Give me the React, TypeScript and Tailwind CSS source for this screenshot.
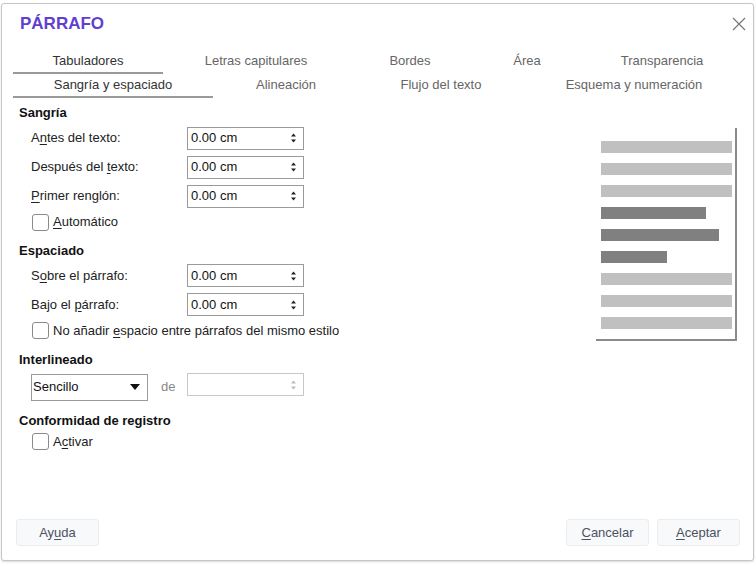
import React from 'react';

const U = ({ children }: { children: React.ReactNode }) => <span className="underline underline-offset-2">{children}</span>;

const Spin = ({ disabled = false }: { disabled?: boolean }) => (
  <svg width="7" height="12" viewBox="0 0 7 12" className={disabled ? 'opacity-30' : ''}>
    <path d="M1 4.5 L3.5 1.5 L6 4.5 Z" fill="#222" />
    <path d="M1 7.5 L3.5 10.5 L6 7.5 Z" fill="#222" />
  </svg>
);

const Field = ({ value = '0.00 cm', disabled = false }: { value?: string; disabled?: boolean }) => (
  <div
    className={`flex h-[23px] w-[117px] items-center justify-between border pl-[3px] pr-[6px] text-[13px] text-[#111] ${
      disabled ? 'border-[#c8c8c8]' : 'border-[#9a9a9a]'
    }`}
  >
    <span>{value}</span>
    <Spin disabled={disabled} />
  </div>
);

const Row = ({ label }: { label: React.ReactNode }) => (
  <div className="flex h-[29px] items-center pl-[17px]">
    <span className="w-[156px] text-[13px] text-[#222]">{label}</span>
    <Field />
  </div>
);

const Check = ({ label }: { label: React.ReactNode }) => (
  <div className="flex h-[23px] items-center gap-[4px] pl-[18px]">
    <div className="h-[17px] w-[17px] rounded-[3px] border border-[#8a8a8a] bg-white" />
    <span className="text-[13px] text-[#222]">{label}</span>
  </div>
);

const Heading = ({ children }: { children: React.ReactNode }) => (
  <div className="pl-[5px] text-[13px] font-bold text-[#111]">{children}</div>
);

const row1 = [
  { t: 'Tabuladores', w: 'w-[150px]', active: true },
  { t: 'Letras capitulares', w: 'w-[186px]' },
  { t: 'Bordes', w: 'w-[122px]' },
  { t: 'Área', w: 'w-[112px]' },
  { t: 'Transparencia', w: 'w-[158px]' },
];
const row2 = [
  { t: 'Sangría y espaciado', w: 'w-[200px]', active: true },
  { t: 'Alineación', w: 'w-[146px]' },
  { t: 'Flujo del texto', w: 'w-[164px]' },
  { t: 'Esquema y numeración', w: 'w-[222px]' },
];

const bars = [
  { w: 'w-[131px]', c: 'bg-[#c0c0c0]' },
  { w: 'w-[131px]', c: 'bg-[#c0c0c0]' },
  { w: 'w-[131px]', c: 'bg-[#c0c0c0]' },
  { w: 'w-[105px]', c: 'bg-[#808080]' },
  { w: 'w-[118px]', c: 'bg-[#808080]' },
  { w: 'w-[66px]', c: 'bg-[#808080]' },
  { w: 'w-[131px]', c: 'bg-[#c0c0c0]' },
  { w: 'w-[131px]', c: 'bg-[#c0c0c0]' },
  { w: 'w-[131px]', c: 'bg-[#c0c0c0]' },
];

const Btn = ({ children }: { children: React.ReactNode }) => (
  <button className="flex h-[27px] w-[83px] items-center justify-center rounded-[3px] border border-[#ececec] bg-[#f8f9fa] text-[13px] text-[#4b5262]">
    {children}
  </button>
);

export default function App() {
  return (
    <div className="h-[566px] w-[756px] overflow-hidden bg-white pt-[3px] pl-[1px] font-['Liberation_Sans',Arial,sans-serif]">
      <div className="flex h-[558px] w-[753px] flex-col rounded-[3px] border border-[#c6c6c6] bg-white shadow-[0_1px_2px_rgba(0,0,0,0.15)]">
        {/* Title */}
        <div className="flex h-[38px] items-center justify-between pl-[18px] pr-[7px] pt-[2px]">
          <span className="text-[17px] font-bold text-[#5f3fd0]">PÁRRAFO</span>
          <svg width="14" height="14" viewBox="0 0 14 14">
            <path d="M1 1 L13 13 M13 1 L1 13" stroke="#777" strokeWidth="1.2" />
          </svg>
        </div>

        {/* Tabs */}
        <div className="mt-[8px] pl-[11px]">
          <div className="flex h-[24px]">
            {row1.map((t) => (
              <div
                key={t.t}
                className={`${t.w} flex items-center justify-center border-b-2 text-[13px] ${
                  t.active ? 'border-[#9a9a9a] text-[#333]' : 'border-transparent text-[#666]'
                }`}
              >
                {t.t}
              </div>
            ))}
          </div>
          <div className="flex h-[24px]">
            {row2.map((t) => (
              <div
                key={t.t}
                className={`${t.w} flex items-center justify-center border-b-2 text-[13px] ${
                  t.active ? 'border-[#9a9a9a] text-[#333]' : 'border-transparent text-[#666]'
                }`}
              >
                {t.t}
              </div>
            ))}
          </div>
        </div>

        {/* Body */}
        <div className="flex flex-1 pl-[12px] pt-[5px]">
          <div className="flex-1">
            <Heading>Sangría</Heading>
            <div className="mt-[1px]">
              <Row label={<>A<U>n</U>tes del texto:</>} />
              <Row label={<>Después del <U>t</U>exto:</>} />
              <Row label={<><U>P</U>rimer renglón:</>} />
              <Check label={<><U>A</U>utomático</>} />
            </div>

            <div className="mt-[7px]">
              <Heading>Espaciado</Heading>
            </div>
            <div className="mt-[1px]">
              <Row label={<>S<U>o</U>bre el párrafo:</>} />
              <Row label={<>Bajo el <U>p</U>árrafo:</>} />
              <Check label={<>No añadir <U>e</U>spacio entre párrafos del mismo estilo</>} />
            </div>

            <div className="mt-[8px]">
              <Heading>Interlineado</Heading>
            </div>
            <div className="mt-[4px] flex items-center pl-[17px]">
              <div className="flex h-[27px] w-[117px] items-center justify-between border border-[#9a9a9a] pl-[1px] pr-[7px] text-[13px] text-[#111]">
                <span>Sencillo</span>
                <svg width="10" height="6" viewBox="0 0 10 6">
                  <path d="M0 0 L10 0 L5 6 Z" fill="#111" />
                </svg>
              </div>
              <span className="w-[39px] pl-[13px] text-[13px] text-[#888]">de</span>
              <div className="-mt-[5px]">
                <Field value="" disabled />
              </div>
            </div>

            <div className="mt-[10px]">
              <Heading>Conformidad de registro</Heading>
            </div>
            <div className="mt-[0px]">
              <Check label={<>A<U>c</U>tivar</>} />
            </div>
          </div>

          {/* Preview */}
          <div className="mr-[16px] mt-[25px] flex h-[213px] w-[141px] flex-col gap-[10px] border-b-2 border-r-2 border-[#8a8a8a] pl-[5px] pt-[13px]">
            {bars.map((b, i) => (
              <div key={i} className={`h-[12px] shrink-0 ${b.w} ${b.c}`} />
            ))}
          </div>
        </div>

        {/* Buttons */}
        <div className="flex items-center justify-between pb-[14px] pl-[14px] pr-[13px]">
          <Btn>Ay<U>u</U>da</Btn>
          <div className="flex gap-[8px]">
            <Btn><U>C</U>ancelar</Btn>
            <Btn><U>A</U>ceptar</Btn>
          </div>
        </div>
      </div>
    </div>
  );
}
